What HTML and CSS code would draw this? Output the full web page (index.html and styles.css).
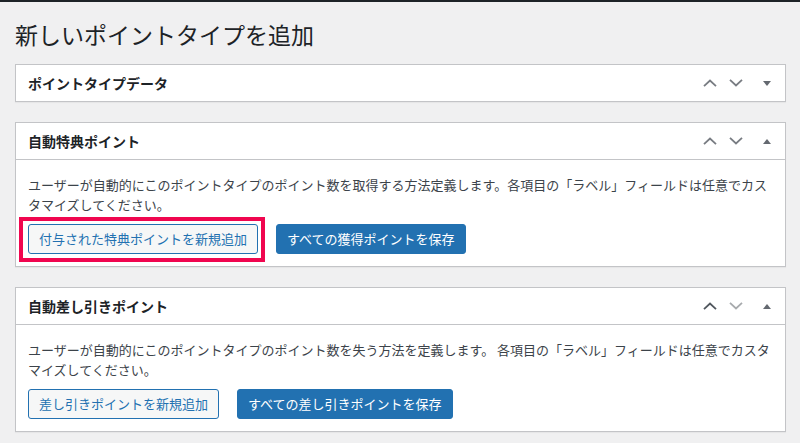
FILE: index.html
```html
<!DOCTYPE html>
<html lang="ja">
<head>
<meta charset="utf-8">
<title>新しいポイントタイプを追加</title>
<link rel="stylesheet" href="styles.css">
</head>
<body>
<div class="adminbar"></div>
<div class="wrap">
  <h1 class="page-title">新しいポイントタイプを追加</h1>

  <div class="postbox closed">
    <div class="postbox-header">
      <h2 class="postbox-title">ポイントタイプデータ</h2>
      <div class="handle-actions">
        <button class="handle-btn"><svg width="14" height="8" viewBox="0 0 14 8"><polyline points="1,7.2 7,1.5 13,7.2" fill="none" stroke="currentColor" stroke-width="1.8"/></svg></button>
        <button class="handle-btn"><svg width="14" height="8" viewBox="0 0 14 8"><polyline points="1,0.8 7,6.5 13,0.8" fill="none" stroke="currentColor" stroke-width="1.8"/></svg></button>
        <button class="handle-btn toggle"><svg width="8" height="5" viewBox="0 0 8 5"><polygon points="0,0 8,0 4,5" fill="currentColor"/></svg></button>
      </div>
    </div>
  </div>

  <div class="postbox">
    <div class="postbox-header">
      <h2 class="postbox-title">自動特典ポイント</h2>
      <div class="handle-actions">
        <button class="handle-btn"><svg width="14" height="8" viewBox="0 0 14 8"><polyline points="1,7.2 7,1.5 13,7.2" fill="none" stroke="currentColor" stroke-width="1.8"/></svg></button>
        <button class="handle-btn"><svg width="14" height="8" viewBox="0 0 14 8"><polyline points="1,0.8 7,6.5 13,0.8" fill="none" stroke="currentColor" stroke-width="1.8"/></svg></button>
        <button class="handle-btn toggle"><svg width="8" height="5" viewBox="0 0 8 5"><polygon points="0,5 8,5 4,0" fill="currentColor"/></svg></button>
      </div>
    </div>
    <div class="inside">
      <p class="desc">ユーザーが自動的にこのポイントタイプのポイント数を取得する方法定義します。各項目の「ラベル」フィールドは任意でカスタマイズしてください。</p>
      <div class="actions">
        <span class="highlight"><button class="button button-secondary">付与された特典ポイントを新規追加</button></span>
        <button class="button button-primary">すべての獲得ポイントを保存</button>
      </div>
    </div>
  </div>

  <div class="postbox">
    <div class="postbox-header">
      <h2 class="postbox-title">自動差し引きポイント</h2>
      <div class="handle-actions">
        <button class="handle-btn active"><svg width="14" height="8" viewBox="0 0 14 8"><polyline points="1,7.2 7,1.5 13,7.2" fill="none" stroke="currentColor" stroke-width="1.8"/></svg></button>
        <button class="handle-btn disabled"><svg width="14" height="8" viewBox="0 0 14 8"><polyline points="1,0.8 7,6.5 13,0.8" fill="none" stroke="currentColor" stroke-width="1.8"/></svg></button>
        <button class="handle-btn toggle"><svg width="8" height="5" viewBox="0 0 8 5"><polygon points="0,5 8,5 4,0" fill="currentColor"/></svg></button>
      </div>
    </div>
    <div class="inside">
      <p class="desc">ユーザーが自動的にこのポイントタイプのポイント数を失う方法を定義します。 各項目の「ラベル」フィールドは任意でカスタマイズしてください。</p>
      <div class="actions">
        <button class="button button-secondary">差し引きポイントを新規追加</button>
        <button class="button button-primary">すべての差し引きポイントを保存</button>
      </div>
    </div>
  </div>
</div>
</body>
</html>
```

FILE: styles.css
```css
html, body {
  margin: 0;
  padding: 0;
}

body {
  background: #f0f0f1;
  font-family: "Noto Sans CJK JP", "Noto Sans", sans-serif;
  font-size: 13px;
  color: #3c434a;
}

.adminbar {
  height: 2px;
  background: #1d2327;
}

.wrap {
  padding: 0 14px 0 15px;
}

.page-title {
  margin: 0;
  padding: 17px 0 15px;
  font-size: 23px;
  font-weight: 400;
  line-height: 30px;
  color: #1d2327;
}

.postbox {
  background: #fff;
  border: 1px solid #c3c4c7;
  box-shadow: 0 1px 1px rgba(0, 0, 0, 0.04);
  margin-bottom: 20px;
}

.postbox-header {
  display: flex;
  align-items: center;
  justify-content: space-between;
  height: 36px;
  border-bottom: 1px solid #c3c4c7;
}

.postbox.closed .postbox-header {
  border-bottom: 0;
}

.postbox-title {
  margin: 0;
  padding: 0 12px;
  font-size: 14px;
  font-weight: 700;
  line-height: 36px;
  color: #1d2327;
}

.handle-actions {
  display: flex;
  height: 36px;
}

.handle-btn {
  display: flex;
  align-items: center;
  justify-content: center;
  width: 26px;
  height: 36px;
  padding: 0;
  border: 0;
  background: none;
  color: #787c82;
}

.handle-btn.active {
  color: #50575e;
}

.handle-btn.disabled {
  color: #a7aaad;
}

.handle-btn.toggle {
  width: 36px;
  color: #646970;
}

.inside {
  padding: 15px 12px 12px;
}

.desc {
  margin: 0 0 10px;
  line-height: 19.5px;
}

.actions {
  display: flex;
  gap: 18px;
  align-items: center;
}

.highlight {
  position: relative;
  display: inline-flex;
}

.highlight::after {
  content: "";
  position: absolute;
  top: -7px;
  left: -9px;
  right: -7px;
  bottom: -8px;
  border: 4px solid #f0064f;
  pointer-events: none;
}

.button {
  font-family: inherit;
  font-size: 13px;
  line-height: 28px;
  min-height: 30px;
  margin: 0;
  padding: 0 10px;
  border: 1px solid #2271b1;
  border-radius: 3px;
  white-space: nowrap;
}

.button-secondary {
  background: #f6f7f7;
  color: #2271b1;
}

.button-primary {
  background: #2271b1;
  color: #fff;
}
```
